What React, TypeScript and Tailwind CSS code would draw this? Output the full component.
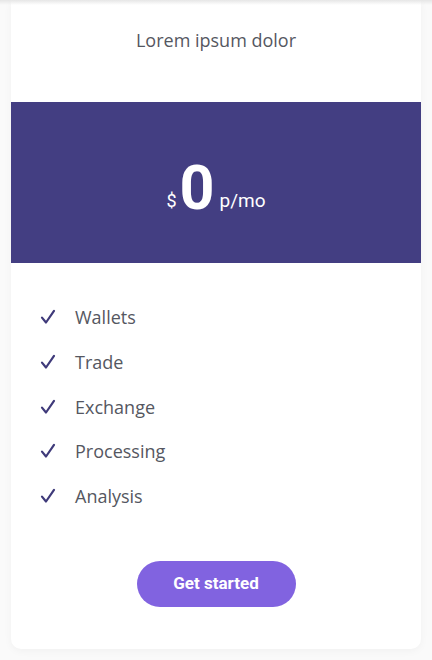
import React from 'react';

const features = ['Wallets', 'Trade', 'Exchange', 'Processing', 'Analysis'];

const Check: React.FC = () => (
  <svg width="16" height="16" viewBox="0 0 16 16" fill="none" className="shrink-0">
    <path d="M2 8.6 L6 13.5 L14 1.8" stroke="#3f3a7a" strokeWidth="2.2" strokeLinecap="round" strokeLinejoin="round" />
  </svg>
);

const App: React.FC = () => {
  return (
    <div className="relative min-h-[660px] w-[432px] bg-[#fafafa] px-[11px]" style={{ fontFamily: '"Open Sans", "Noto Sans", sans-serif' }}>
      <div className="absolute left-0 right-0 top-0 h-[5px] bg-gradient-to-b from-[#e6e6e6] to-transparent" />
      <div className="flex flex-col rounded-b-[10px] bg-white shadow-[0_2px_8px_rgba(0,0,0,0.04)]">
        <div className="flex h-[102px] justify-center pt-[27px]">
          <h2 className="text-[18px] leading-[26px] text-[#555761]">Lorem ipsum dolor</h2>
        </div>
        <div className="flex h-[161px] items-center justify-center bg-[#433e82] pt-[10px] text-white" style={{ fontFamily: 'Roboto, "Liberation Sans", sans-serif' }}>
          <div className="flex items-end">
            <span className="mb-[4px] mr-[3px] text-[18px] leading-none">$</span>
            <span className="text-[61px] font-bold leading-[52px]">0</span>
            <span className="mb-[4px] ml-[5px] text-[19px] leading-none">p/mo</span>
          </div>
        </div>
        <ul className="flex flex-col gap-[20.8px] px-[29px] pt-[42px]">
          {features.map((f) => (
            <li key={f} className="flex items-center gap-[19px]">
              <Check />
              <span className="text-[18px] leading-[24px] text-[#555761]">{f}</span>
            </li>
          ))}
        </ul>
        <div className="flex justify-center pb-[42px] pt-[53px]">
          <button className="h-[46px] w-[159px] rounded-full bg-[#8163e0] text-[17px] font-bold text-white" style={{ fontFamily: 'Roboto, "Liberation Sans", sans-serif' }}>
            Get started
          </button>
        </div>
      </div>
    </div>
  );
};

export default App;
